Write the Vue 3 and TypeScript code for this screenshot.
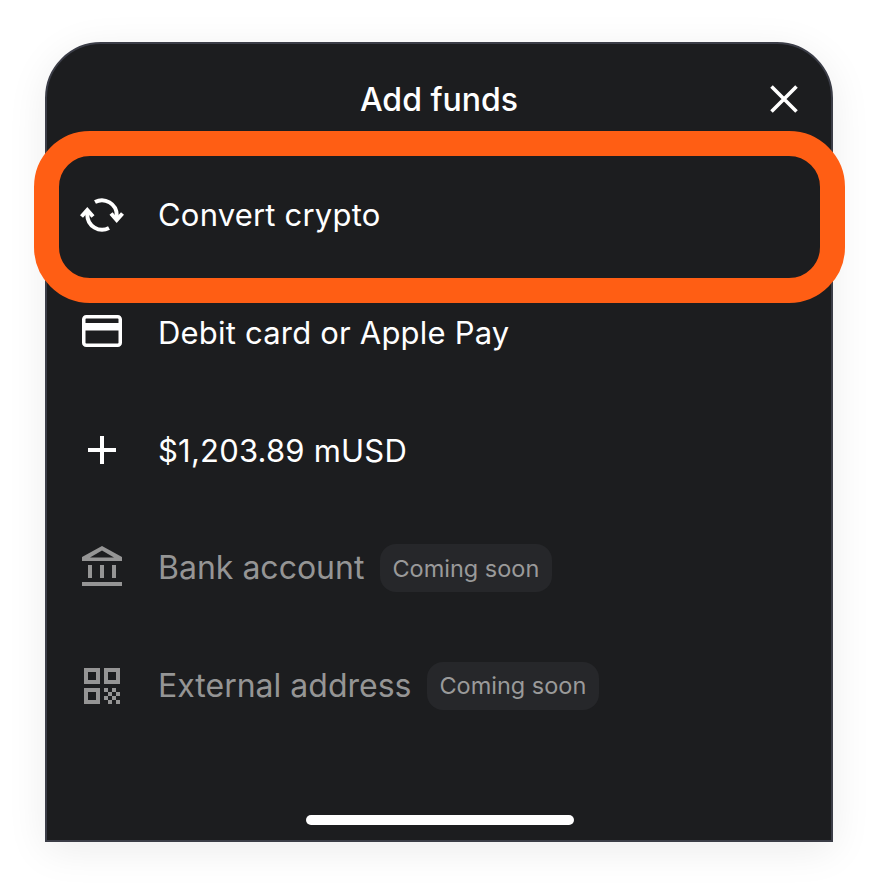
<script setup lang="ts">
interface FundOption {
  label: string;
  icon: string;
  soon?: boolean;
  selected?: boolean;
}

const options: FundOption[] = [
  { label: 'Convert crypto', icon: 'convert', selected: true },
  { label: 'Debit card or Apple Pay', icon: 'card' },
  { label: '$1,203.89 mUSD', icon: 'plus' },
  { label: 'Bank account', icon: 'bank', soon: true },
  { label: 'External address', icon: 'qr', soon: true },
];
</script>

<template>
  <main class="page">
    <section class="sheet">
      <header class="head">
        <h1 class="title">Add funds</h1>
        <button class="close" aria-label="Close">
          <svg width="32" height="32" viewBox="0 0 32 32" fill="none" stroke="#fff" stroke-width="3.6">
            <path d="M3.5 3.5 28.5 28.5M28.5 3.5 3.5 28.5" />
          </svg>
        </button>
      </header>

      <ul class="list">
        <li
          v-for="item in options"
          :key="item.label"
          class="row"
          :class="{ muted: item.soon }"
        >
          <div v-if="item.selected" class="ring"></div>
          <svg class="icon" width="48" height="48" viewBox="0 0 48 48" fill="none">
            <g v-if="item.icon === 'convert'" stroke="currentColor" stroke-width="4">
              <path d="M38.7 29V24A14.8 14.8 0 0 0 17 11" />
              <path d="M9.3 19V24A14.8 14.8 0 0 0 31 37" />
              <path d="M3.5 25.5 9.3 19 15 25.5" />
              <path d="M44.5 22.5 38.7 29 33 22.5" />
            </g>
            <g v-else-if="item.icon === 'card'">
              <rect x="5.75" y="7.75" width="36.5" height="28.5" rx="2.5" stroke="currentColor" stroke-width="3.5" />
              <rect x="6" y="14" width="36" height="7.5" fill="currentColor" />
            </g>
            <path
              v-else-if="item.icon === 'plus'"
              d="M24 10V38M10 24H38"
              stroke="currentColor"
              stroke-width="4"
            />
            <g v-else-if="item.icon === 'bank'" fill="currentColor">
              <path d="M24 2 44 13V17H4V13ZM24 6.5 12 13.5H36Z" fill-rule="evenodd" />
              <rect x="10" y="21" width="4" height="13" />
              <rect x="22" y="21" width="4" height="13" />
              <rect x="34" y="21" width="4" height="13" />
              <rect x="4" y="38" width="40" height="4" />
            </g>
            <g v-else-if="item.icon === 'qr'">
              <g stroke="currentColor" stroke-width="4">
                <rect x="8" y="8" width="12" height="12" />
                <rect x="28" y="8" width="12" height="12" />
                <rect x="8" y="28" width="12" height="12" />
              </g>
              <path
                d="M26 26h4v4h-4ZM34 26h4v4h-4ZM30 30h4v4h-4ZM38 30h4v4h-4ZM26 34h4v4h-4ZM34 34h4v4h-4ZM30 38h4v4h-4ZM38 38h4v4h-4Z"
                fill="currentColor"
              />
            </g>
          </svg>
          <span class="label">{{ item.label }}</span>
          <span v-if="item.soon" class="chip">Coming soon</span>
        </li>
      </ul>

      <div class="home-bar"></div>
    </section>
  </main>
</template>

<style>
html,
body {
  background: #fff;
}
</style>

<style scoped>
.page {
  height: 886px;
  overflow: hidden;
  padding: 42px 41px 44px 45px;
  box-sizing: border-box;
  font-family: Inter, "Liberation Sans", sans-serif;
}

.sheet {
  height: 800px;
  box-sizing: border-box;
  display: flex;
  flex-direction: column;
  background: #1c1d1f;
  border: 2px solid #3b3d47;
  border-radius: 56px 56px 0 0;
  box-shadow: 0 8px 40px rgba(0, 0, 0, 0.08);
  color: #fff;
}

.head {
  position: relative;
  height: 112px;
  display: flex;
  align-items: center;
  justify-content: center;
}

.title {
  margin: 0;
  font-size: 32px;
  font-weight: 550;
  line-height: 1;
}

.close {
  position: absolute;
  top: 39px;
  right: 31px;
  display: flex;
  padding: 0;
  border: none;
  background: none;
}

.list {
  list-style: none;
  margin: 0;
  padding: 0 0 0 31px;
  display: flex;
  flex-direction: column;
}

.row {
  position: relative;
  height: 117.75px;
  display: flex;
  align-items: center;
  color: #fff;
}

.row.muted {
  color: #959595;
}

.ring {
  position: absolute;
  left: -44px;
  top: -25px;
  width: 811px;
  height: 172px;
  box-sizing: border-box;
  border: 25px solid #ff5e14;
  border-radius: 56px;
}

.icon {
  flex: none;
  margin-right: 32px;
}

.label {
  font-size: 31px;
  font-weight: 420;
  line-height: 1;
  letter-spacing: 0.2px;
}

.muted .label {
  font-size: 32px;
  font-weight: 400;
  letter-spacing: 0;
}

.chip {
  margin-left: 15.5px;
  height: 48px;
  padding: 0 12.5px;
  display: flex;
  align-items: center;
  border-radius: 16px;
  background: #26272a;
  color: #9a9a9a;
  font-size: 23.5px;
}

.home-bar {
  margin: auto auto 15px 259px;
  width: 268px;
  height: 10px;
  border-radius: 5px;
  background: #fff;
}
</style>
